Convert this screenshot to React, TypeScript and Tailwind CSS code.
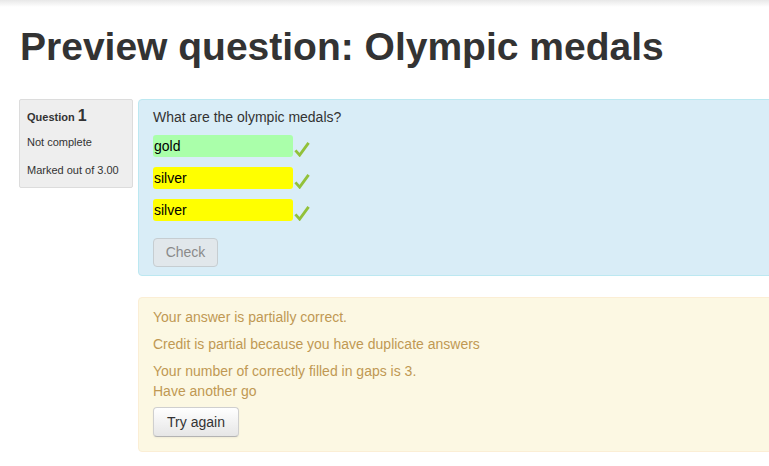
import React from 'react';

const answers = [
  { value: 'gold', bg: 'bg-[#aaffaa]' },
  { value: 'silver', bg: 'bg-[#ffff00]' },
  { value: 'silver', bg: 'bg-[#ffff00]' },
];

const Tick = () => (
  <svg width="16" height="16" viewBox="0 0 16 17" className="ml-[1px] mt-[6px] shrink-0">
    <path d="M1 10 L5.5 15 L15 2" fill="none" stroke="#92c13a" strokeWidth="3" strokeLinejoin="miter" />
  </svg>
);

export default function App() {
  return (
    <div className="w-[769px] h-[466px] overflow-hidden bg-white font-['Liberation_Sans',Arial,sans-serif] text-[#333]">
      {/* navbar shadow */}
      <div className="h-[7px] bg-gradient-to-b from-[#e8e8e8] to-white" />

      <h1 className="pl-[20px] mt-[17px] text-[39px] font-bold leading-[46px] text-[#333]">
        Preview question: Olympic medals
      </h1>

      <div className="flex items-start mt-[29px] pl-[19px]">
        {/* question info */}
        <div className="w-[114px] shrink-0 bg-[#eeeeee] border border-[#dcdcdc] rounded-[2px] px-[7px] pt-[9px] pb-[10px] text-[11px] leading-[14px] text-[#333]">
          <div className="font-bold">
            Question <span className="text-[16px]">1</span>
          </div>
          <div className="mt-[11px]">Not complete</div>
          <div className="mt-[14px]">Marked out of 3.00</div>
        </div>

        {/* question content */}
        <div className="ml-[5px] w-[660px] shrink-0">
          <div className="bg-[#d9edf7] border border-[#bce8f1] rounded-[4px] pl-[14px] pt-[7px] pb-[8px]">
            <p className="text-[14px] leading-[20px] text-[#333]">What are the olympic medals?</p>
            <div className="mt-[8px] flex flex-col gap-[10px]">
              {answers.map((a, i) => (
                <div key={i} className="flex items-start h-[22px]">
                  <div className={`w-[140px] h-[22px] rounded-[3px] ${a.bg} text-[14px] leading-[22px] text-black pl-[1px]`}>
                    {a.value}
                  </div>
                  <Tick />
                </div>
              ))}
            </div>
            <button
              disabled
              className="mt-[17px] h-[29px] w-[65px] rounded-[4px] border border-[#c6cdd1] bg-[#e1e7eb] text-[14px] text-[#8a8a8a]"
            >
              Check
            </button>
          </div>

          {/* feedback */}
          <div className="mt-[21px] bg-[#fcf8e3] border border-[#fbeed5] rounded-[4px] pl-[14px] pt-[9px] pb-[14px] text-[14px] leading-[20px] text-[#c09853]">
            <p>Your answer is partially correct.</p>
            <p className="mt-[7px]">Credit is partial because you have duplicate answers</p>
            <p className="mt-[7px]">
              Your number of correctly filled in gaps is 3.
              <br />
              Have another go
            </p>
            <button className="mt-[6px] h-[30px] w-[86px] rounded-[4px] border border-[#cfcfcf] border-b-[#b3b3b3] bg-gradient-to-b from-white to-[#e6e6e6] text-[14px] text-[#333] shadow-[inset_0_1px_0_rgba(255,255,255,0.2),0_1px_2px_rgba(0,0,0,0.05)]">
              Try again
            </button>
          </div>
        </div>
      </div>
    </div>
  );
}
